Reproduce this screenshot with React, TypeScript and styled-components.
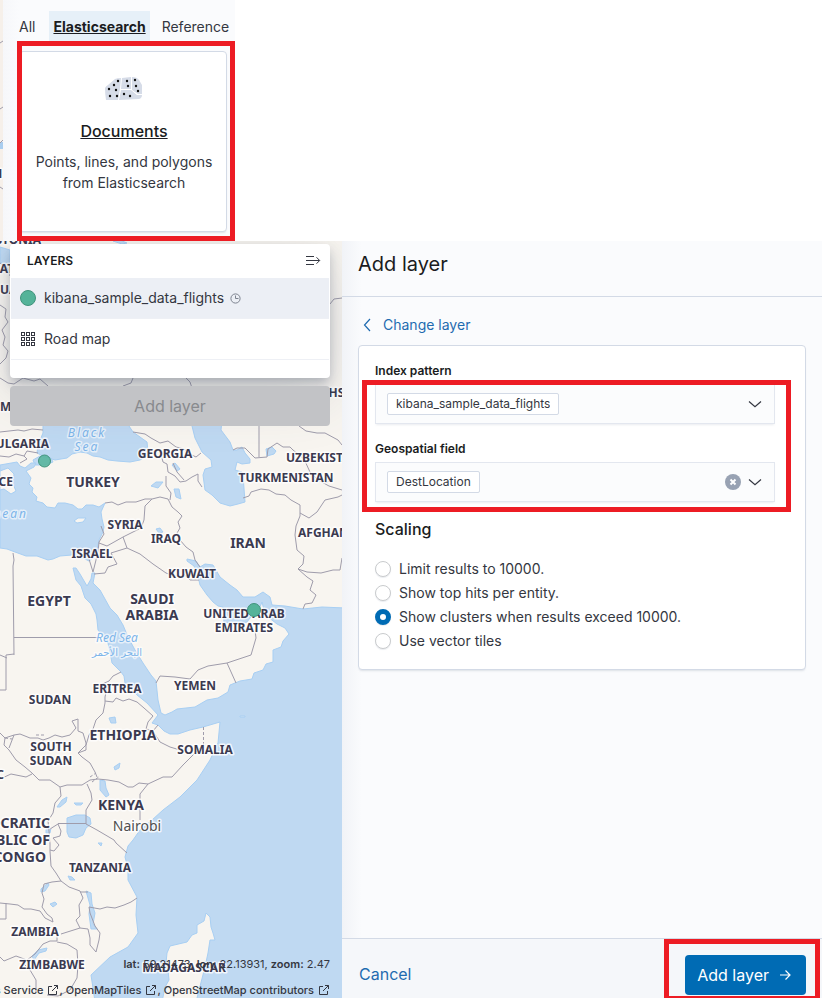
import React, { useState } from "react";
import styled, { createGlobalStyle } from "styled-components";

const GlobalStyle = createGlobalStyle`
  *, *::before, *::after { box-sizing: border-box; }
  body {
    margin: 0;
    background: #fff;
    color: #343741;
    font: 400 14px/20px Inter, "Open Sans", sans-serif;
  }
  button, select, input { font: inherit; color: inherit; margin: 0; }
`;

const Page = styled.div`
  display: grid;
  grid-template-rows: auto 1fr;
  min-height: 100vh;
  padding-right: 2px;
  overflow: hidden;
`;

const SourcePicker = styled.section`
  display: grid;
  grid-template-columns: 3px 232px;
  height: 241px;
`;

const EdgeSvg = styled.svg`
  display: block;
  width: 3px;
  height: 241px;
`;

const PickerPanel = styled.div`
  position: relative;
  padding: 11px 8px 0 4px;
  background: linear-gradient(90deg, #f6f7fa, #fafbfd 16px);
`;

const Tabs = styled.div`
  display: flex;
`;

const Tab = styled.button<{ $active?: boolean }>`
  height: 32px;
  padding: 0 4px;
  margin-right: 8px;
  border: 0;
  background: ${(p) => (p.$active ? "#e6f0f8" : "transparent")};
  color: ${(p) => (p.$active ? "#1a1c21" : "#343741")};
  font-weight: ${(p) => (p.$active ? 700 : 400)};
  text-decoration: ${(p) => (p.$active ? "underline" : "none")};
  white-space: nowrap;
  &:first-child { padding-left: 12px; margin-right: 10px; }
`;

const SourceCard = styled.a`
  display: flex;
  flex-direction: column;
  align-items: center;
  height: 181px;
  margin: 8px 0 0 12px;
  padding: 25px 15px 24px 17px;
  border: 1px solid #d3dae6;
  border-radius: 4px;
  background: #fff;
  box-shadow: 0 2px 2px -1px rgba(152, 162, 179, 0.3);
  color: #343741;
  text-align: center;
  text-decoration: none;
`;

const CardTitle = styled.span`
  margin: 18px 0 8px;
  color: #1a1c21;
  font-size: 16px;
  line-height: 24px;
  font-weight: 500;
  text-decoration: underline;
`;

const CardText = styled.span`
  line-height: 21px;
  white-space: nowrap;
`;

const Highlight = styled.div`
  position: absolute;
  border: 5px solid #ed1c24;
  pointer-events: none;
`;

const SourceHighlight = styled(Highlight)`
  inset: 41px 0 0 14px;
`;

const FieldsHighlight = styled(Highlight)`
  inset: 18px -16px -10px -13px;
`;

const SubmitHighlight = styled(Highlight)`
  inset: -16px -14px -6px -21px;
`;

const Workspace = styled.main`
  display: grid;
  grid-template-columns: minmax(0, 1fr) 480px;
`;

const MapArea = styled.section`
  position: relative;
  display: flex;
  flex-direction: column;
  padding: 3px 12px 0 10px;
  overflow: hidden;
`;

const MapSvg = styled.svg`
  position: absolute;
  inset: 0;
  width: 100%;
  height: 100%;
`;

const LayerPanel = styled.div`
  position: relative;
  height: 134px;
  padding: 0 1px;
  border-radius: 4px;
  background: #fff;
  box-shadow: 0 6px 12px -1px rgba(65, 78, 101, 0.35), 0 16px 60px rgba(65, 78, 101, 0.2);
`;

const LayerHeader = styled.div`
  display: flex;
  align-items: center;
  justify-content: space-between;
  height: 34px;
  padding: 0 8px 0 16px;
`;

const LayerHeading = styled.h2`
  margin: 0;
  color: #1a1c21;
  font-size: 12px;
  line-height: 16px;
  font-weight: 600;
`;

const IconButton = styled.button`
  display: flex;
  padding: 0;
  border: 0;
  background: none;
`;

const LayerRow = styled.button<{ $selected?: boolean }>`
  display: flex;
  align-items: center;
  width: 100%;
  height: 41px;
  padding: 0 9px;
  border: 0;
  border-bottom: 1px solid #eef0f5;
  background: ${(p) => (p.$selected ? "#eceff5" : "#fff")};
  text-align: left;
`;

const LayerName = styled.span`
  margin: 0 6px 0 8px;
`;

const DisabledButton = styled.button`
  position: relative;
  height: 40px;
  margin-top: 8px;
  border: 0;
  border-radius: 4px;
  background: #c2c3c6;
  color: #888a8e;
  font-size: 16px;
`;

const MapFooter = styled.div`
  position: relative;
  display: flex;
  flex-direction: column;
  align-items: flex-end;
  gap: 10px;
  margin-top: auto;
  color: #343741;
  font-size: 11px;
  line-height: 16px;
  white-space: nowrap;
  b { font-weight: 600; }
`;

const Attribution = styled.div`
  display: flex;
  font-weight: 500;
`;

const AttributionLink = styled.a`
  display: flex;
  align-items: center;
  gap: 4px;
  color: inherit;
  text-decoration: none;
`;

const Flyout = styled.aside`
  display: grid;
  grid-template-rows: 56px 1fr 60px;
  background: linear-gradient(90deg, #f1f3f7, #fafbfd 20px);
`;

const FlyoutHeader = styled.header`
  padding: 8px 16px;
  border-bottom: 1px solid #d3dae6;
`;

const FlyoutTitle = styled.h1`
  margin: 0;
  color: #1a1c21;
  font-size: 20px;
  line-height: 30px;
  font-weight: 400;
`;

const FlyoutBody = styled.div`
  padding: 16px;
`;

const BackLink = styled.button`
  display: flex;
  align-items: center;
  gap: 8px;
  height: 24px;
  padding: 0 1px;
  border: 0;
  background: none;
  color: #1f6bb0;
`;

const FormCard = styled.form`
  margin-top: 8px;
  padding: 16px;
  border: 1px solid #d3dae6;
  border-radius: 4px;
  background: #fff;
  box-shadow: 0 2px 2px -1px rgba(152, 162, 179, 0.3);
`;

const FieldLabel = styled.label`
  display: block;
  padding-bottom: 4px;
  color: #1a1c21;
  font-size: 12px;
  line-height: 18px;
  font-weight: 600;
`;

const FieldGroup = styled.div`
  position: relative;
  max-width: 400px;
`;

const ComboField = styled.div`
  display: flex;
  align-items: center;
  gap: 6px;
  height: 40px;
  padding: 0 11px;
  border: 1px solid #e3e7ef;
  background: #fbfcfd;
  box-shadow: 0 2px 2px -1px rgba(152, 162, 179, 0.2);
  & + label { margin-top: 16px; }
`;

const PillSelect = styled.select`
  appearance: none;
  field-sizing: content;
  height: 22px;
  padding: 0 8px;
  margin-right: auto;
  border: 1px solid #d3dae6;
  border-radius: 2px;
  background: #fff;
  font-size: 12px;
  line-height: 20px;
`;

const Scaling = styled.fieldset`
  margin: 15px 0 0;
  padding: 0;
  border: 0;
`;

const ScalingTitle = styled.legend`
  padding: 0;
  margin-bottom: 16px;
  color: #1a1c21;
  font-size: 16px;
  line-height: 24px;
  font-weight: 500;
`;

const RadioLabel = styled.label`
  display: flex;
  align-items: center;
  gap: 8px;
  height: 24px;
`;

const Radio = styled.input`
  appearance: none;
  width: 16px;
  height: 16px;
  border: 1px solid #c9cbcd;
  border-radius: 50%;
  background: #fff;
  box-shadow: 0 1px 1px rgba(152, 162, 179, 0.2);
  &:checked { border: 5px solid #006bb4; }
`;

const FlyoutFooter = styled.footer`
  display: flex;
  align-items: flex-start;
  justify-content: space-between;
  padding: 16px 16px 0 17px;
  border-top: 1px solid #d3dae6;
  background: #f5f7fa;
  overflow: hidden;
`;

const CancelButton = styled.button`
  height: 38px;
  padding: 0;
  border: 0;
  background: none;
  color: #1f6bb0;
  font-size: 16px;
`;

const SubmitWrap = styled.div`
  position: relative;
`;

const SubmitButton = styled.button`
  display: flex;
  align-items: center;
  gap: 8px;
  height: 40px;
  padding: 0 13px 0 12px;
  border: 0;
  border-radius: 4px;
  background: #006bb4;
  color: #fff;
  font-size: 16px;
`;

const Icon = styled.svg`
  flex: none;
  display: block;
  fill: none;
  stroke: currentColor;
`;

const DocumentsIcon = () => (
  <Icon width="38" height="24" viewBox="0 0 38 24" aria-hidden="true">
    <g fill="#d6dce8" stroke="none">
      <path d="M0 11Q1 9 3 8L10 2Q12 1 16 1L15 12 13 23H1Q0 17 0 11z" />
      <path d="M17 1 26 0V12H16z" />
      <path d="M27 0Q32 0 34 3L37 8V17H33L27 13z" />
      <path d="M16 13H26L32 18H37Q37 21 34 22L14 23z" />
    </g>
    {[[13, 4], [9, 8], [4, 12], [11, 13], [5, 19], [12, 19], [22, 4], [23, 9], [30, 3], [31, 9], [33, 14], [19, 17], [25, 19]].map(([x, y]) => (
      <circle key={`${x}-${y}`} cx={x} cy={y} r="1.2" fill="#111" stroke="none" />
    ))}
  </Icon>
);

const CollapseIcon = () => (
  <Icon width="16" height="16" viewBox="0 0 16 16" aria-hidden="true">
    <path d="M1 3.5h8M1 7.500h13.500M1 11.500h8M11.500 4.300l3.200 3.200-3.200 3.200" />
  </Icon>
);

const ClockIcon = () => (
  <Icon width="11" height="11" viewBox="0 0 11 11" stroke="#69707d" aria-hidden="true">
    <g stroke="#7d838f">
      <circle cx="5.500" cy="5.500" r="4.600" />
      <path d="M5.500 2.500v3h3" />
    </g>
  </Icon>
);

const DotIcon = () => (
  <Icon width="16" height="16" viewBox="0 0 16 16" aria-hidden="true">
    <circle cx="8" cy="8" r="7.500" fill="#54b399" stroke="#41937c" />
  </Icon>
);

const GridIcon = () => (
  <Icon width="16" height="16" viewBox="0 0 16 16" aria-hidden="true">
    {[1.5, 6.5, 11.5].flatMap((y) =>
      [1.5, 6.5, 11.5].map((x) => <rect key={`${x}-${y}`} x={x} y={y} width="3" height="3" stroke="#343741" />)
    )}
  </Icon>
);

const PopoutIcon = () => (
  <Icon width="12" height="12" viewBox="0 0 12 12" aria-hidden="true">
    <path d="M5 2.500H1.500v8h8V7M7 1.500h3.500V5M10.500 1.500 5 7" />
  </Icon>
);

const ChevronLeft = () => (
  <Icon width="16" height="16" viewBox="0 0 16 16" strokeWidth="1.200" aria-hidden="true">
    <path d="M11 2 5.500 8l5.500 6" />
  </Icon>
);

const ChevronDown = () => (
  <Icon width="16" height="16" viewBox="0 0 16 16" strokeWidth="1.200" aria-hidden="true">
    <path d="m2 5.500 6 5.300 6-5.300" />
  </Icon>
);

const ClearIcon = () => (
  <Icon width="16" height="16" viewBox="0 0 16 16" aria-hidden="true">
    <circle cx="8" cy="8" r="8" fill="#98a2b3" stroke="none" />
    <g stroke="#fff" strokeWidth="2">
      <path d="m5.500 5.500 5 5m0-5-5 5" />
    </g>
  </Icon>
);

const ArrowRight = () => (
  <Icon width="16" height="16" viewBox="0 0 16 16" strokeWidth="1.200" aria-hidden="true">
    <path d="M3 8h10M8.500 3.500 13 8l-4.500 4.500" />
  </Icon>
);

const WATER = [
  "M0 247 10 250V263H0z",
  "M113 241 120 240 127 243 122 244z",
  "M43 420V433L38 445 37 453 45 457 55 460 67 458 72 454 80 452 87 453 93 456 100 457 108 460 117 461 130 462 140 460 147 456 148 452 147 442 133 432 125 420z",
  "M33 460 40 456 51 458 53 462 45 465 35 465z",
  "M0 465 17 462 20 466 25 468 31 463 36 463 34 467 26 471 31 478 29 484 33 488 32 492 37 497 36 501 43 503 47 507 55 508 58 503 65 503 73 505 78 509 82 509 86 505 93 505 99 507 105 503 101 512 102 519 104 527 103 532 99 540 97 550 93 558 89 561 83 558 78 558 72 555 60 556 53 559 48 560 37 556 26 556 15 552 7 549 0 548z",
  "M190 420 192 426 195 438 202 452 211 460 212 467 205 469 203 475 205 490 212 495 220 503 230 506 238 504 245 502 243 475 242 472 235 470 237 462 242 464 250 463 250 459 245 453 242 447 237 450 233 450 230 442 221 430 222 420z",
  "M266 449 272 447 276 451 274 454 267 456z",
  "M151 486 156 482 163 482 158 488z",
  "M172 465 175 463 180 469 177 471z",
  "M174 489 179 489 181 499 176 497z",
  "M156 529 160 528 163 532 159 533z",
  "M187 559 196 561 200 567 205 564 213 565 220 577 230 585 237 590 243 597 255 597 263 592 270 597 272 605 285 606 303 609 322 607 345 608V1002H95L93 988 91 975 110 957 128 947 138 933 136 915 137 897 128 880 128 868 125 857 128 846 133 840 140 830 152 820 163 810 180 797 197 780 210 760 218 743 220 722 203 727 190 730 178 734 170 734 164 731 158 725 152 723 158 715 147 703 137 695 125 683 124 676 121 672 112 663 110 652 108 643 98 630 97 620 96 614 91 604 85 598 81 586 76 580 73 568 76 568 80 574 87 586 91 579 92 573 95 573 93 583 100 590 110 608 117 615 123 625 128 637 135 650 143 663 151 675 156 681 158 700 161 713 165 715 172 712 177 709 186 708 195 707 207 700 218 698 228 692 230 685 240 681 252 679 254 673 263 670 266 664 273 662 273 650 281 647 283 641 289 634 285 628 277 624 268 617 264 610 262 602 258 612 250 618 247 622 235 624 224 622 223 607 218 606 213 602 207 595 200 585 197 572 194 566 187 561z",
  "M67 818 76 815 85 815 90 818 91 824 86 828 83 835 76 838 69 837 67 832z",
  "M109 718 115 717 116 723 111 723z",
  "M100 780 105 781 106 788 109 795 106 797 100 790z",
  "M57 807 62 800 67 797 66 802 60 807z",
  "M74 803 83 803 81 805 76 805z",
  "M114 767 120 763 119 768 115 770z",
  "M46 829 51 828 50 833 46 833z",
  "M86 891 91 893 92 904 95 913 93 924 97 929 91 929 89 914 90 905z",
  "M68 876 72 877 75 880 70 880z",
  "M41 889 48 883 49 885 45 891 41 892z",
  "M50 904 55 902 57 904 53 907z",
  "M32 956 38 950 47 948 46 951 39 953 34 960z",
  "M98 843 102 843 101 846z",
];

const ISLANDS = [
  "M206 913 210 917 211 927 213 933 215 940 210 940 208 953 205 967 197 998V1002H162L165 987 169 980 168 970 166 963 167 953 170 946 187 942 192 935 197 933 197 925 204 921z",
  "M74 521 78 518 86 518 83 522 77 523z",
  "M240 716 245 716 245 717 240 717z",
  "M0 471 8 468 14 474 13 484 16 491 11 494 4 489 0 490z",
];

const BORDERS = [
  "M0 263 8 269 10 276M0 305 6 309 5 317 8 322 2 330 5 337 3 345 8 351 6 358 0 364M0 378 8 383 14 384 23 378 34 381 40 379 48 386M123 386 131 383 133 378M185 377 190 382 192 388M330 304 334 299 342 298",
  "M0 432 18 430 24 431 32 429 43 430M0 456 9 457 16 454 24 456 27 451 38 453M24 456 27 459 20 463",
  "M133 432 145 434 151 438 160 443 168 441 176 447 184 449 190 454 196 457 201 453M160 450 163 462 167 464 168 472 175 476 180 482 186 481 192 477 198 474 198 481 202 487M166 476 166 486 171 493 170 500M173 463 177 472 184 480",
  "M105 503 112 502 118 505 126 502 136 502 145 499 152 499 160 497 168 499 172 507 178 512 182 516 178 522 180 528 177 533 180 540 186 547 193 552 195 560 200 567",
  "M152 499 145 506 144 520 141 528 123 537 107 546 99 543M123 537 127 548 111 553M127 548 140 554 153 564 166 573 174 576 184 576 190 575M184 574 190 580 199 580M111 553 117 564 108 567 105 573 94 574M93 572 89 559M93 572 98 552 99 542 104 534 101 526",
  "M233 450 237 448 245 448 251 454 255 458 267 457 268 449 277 443 283 447 290 447 293 450M259 457V426M299 426 306 431 317 433 325 433 338 440 342 445M293 450 304 459 310 472M332 480 325 483M310 472 318 480 329 486 342 490",
  "M243 498 249 496 251 492 261 489 269 490 276 494 285 495 291 500 300 505 300 516 296 526 295 535 297 550 304 556 303 564 298 569 307 577 313 581 310 590 316 595 312 603 305 604 303 609M300 513 309 518 317 512 325 500 338 497 342 495M298 569 307 572 321 573 333 570 340 570 342 558",
  "M13 553 14 560 13 566 14 655M14 637.500H98M14 654 6 655V690H0M0 655 7 658",
  "M98 686 109 681 113 676 121 672M105 697 107 688 109 684M156 683 160 676 175 677 190 679 198 670 208 666 227 663 251 655 256 638 255 630M227 663 236 683",
  "M105 701 113 702 116 698 123 701 129 699 137 702 144 708 153 716 148 722 146 729 153 731 158 725M105 697 105 703 103 713 96 720 93 729 89 735 86 745 78 753 82 757 90 763 95 772 97 777M153 731 160 742 170 747 180 750",
  "M194 754 183 765 172 777 163 777 148 784 139 783 133 787 128 787 119 782 108 780 98 779 90 780M148 784 140 794 140 820M194 754 201 747",
  "M0 733 5 738 14 735 20 734 30 738 38 738 43 740 49 738 55 735 62 737 70 735 76 728 72 721 78 719 78 731 83 733 86 743 86 750 78 753M5 738 4 745 9 750 16 760 25 767 32 773 39 780 50 780 60 787 67 785 82 785 90 780M0 779 11 774 26 777 32 774M14 735 9 748",
  "M60 787 61 796 55 803 53 813 48 821 49 831 50 844 50 851 51 866 56 873 61 881M87 784 91 793 92 800 89 805 86 810 86 824 97 830 114 840 116 843 127 853M58 823.500H86M50 829 58 824 61 831 60 836 53 838 59 845 54 851 50 850",
  "M61 881 52 882 44 884 42 893 44 899 42 907 47 914 52 918 53 922 45 918 40 911 31 909 24 909 18 905 10 904 0 903M61 881 69 887 80 891 83 898 79 905 80 916 76 920 80 928 88 929 90 938 90 945 96 952 99 940 100 933 95 926 90 913 89 907 100 909 107 907 115 908 124 905 131 902 137 898M80 892 88 892M80 928 61 934M6 903V919H0",
  "M57 928V934L57 941 50 941 43 944 35 954 27 960 16 956 4 961 0 957M57 942 67 944 77 950 78 965 77 978 70 990 58 996 47 995M22 962 30 970 36 980 36 992",
];

const DASHED = ["M203.500 727V747", "M36 735H46M90 777 96 773M92 782 100 776", "M5 738 12 739"];

type LabelSize = "small" | "large";
const COUNTRIES: { lines: string[]; x: number; y: number; size?: LabelSize; anchor?: "start" | "end" }[] = [
  { lines: ["ESTONIA"], x: 41, y: 244, anchor: "end" },
  { lines: ["LATVIA"], x: 35, y: 273, anchor: "end" },
  { lines: ["LITHUANIA"], x: 40, y: 294, anchor: "end" },
  { lines: ["MOLDOVA"], x: 0, y: 411, anchor: "start" },
  { lines: ["KAZAKHSTAN"], x: 289, y: 397, anchor: "start" },
  { lines: ["BULGARIA"], x: 49, y: 448, anchor: "end" },
  { lines: ["GREECE"], x: 13, y: 486, anchor: "end" },
  { lines: ["TURKEY"], x: 93, y: 487, size: "large" },
  { lines: ["GEORGIA"], x: 165, y: 458 },
  { lines: ["UZBEKISTAN"], x: 286, y: 462, anchor: "start" },
  { lines: ["TURKMENISTAN"], x: 286, y: 482 },
  { lines: ["SYRIA"], x: 125, y: 529 },
  { lines: ["IRAQ"], x: 166, y: 543 },
  { lines: ["IRAN"], x: 248, y: 548, size: "large" },
  { lines: ["AFGHANISTAN"], x: 298, y: 537, anchor: "start" },
  { lines: ["ISRAEL"], x: 92, y: 558 },
  { lines: ["KUWAIT"], x: 192, y: 578 },
  { lines: ["EGYPT"], x: 49, y: 606, size: "large" },
  { lines: ["SAUDI", "ARABIA"], x: 152, y: 604, size: "large" },
  { lines: ["UNITED ARAB", "EMIRATES"], x: 244, y: 618 },
  { lines: ["SUDAN"], x: 50, y: 704 },
  { lines: ["ERITREA"], x: 117, y: 693 },
  { lines: ["YEMEN"], x: 195, y: 690 },
  { lines: ["ETHIOPIA"], x: 123, y: 740, size: "large" },
  { lines: ["SOUTH", "SUDAN"], x: 51, y: 751 },
  { lines: ["SOMALIA"], x: 205, y: 754 },
  { lines: ["KENYA"], x: 121, y: 810, size: "large" },
  { lines: ["DEMOCRATIC"], x: 50, y: 828, size: "large", anchor: "end" },
  { lines: ["REPUBLIC OF"], x: 50, y: 845, size: "large", anchor: "end" },
  { lines: ["THE CONGO"], x: 46, y: 862, size: "large", anchor: "end" },
  { lines: ["TANZANIA"], x: 100, y: 872 },
  { lines: ["ZAMBIA"], x: 35, y: 936 },
  { lines: ["ZIMBABWE"], x: 52, y: 969 },
  { lines: ["MADAGASCAR"], x: 184, y: 972 },
  { lines: ["AFRICAN REPUBLIC"], x: 4, y: 779, anchor: "end" },
];

const CountryText = styled.text<{ $size: LabelSize }>`
  fill: #3b3a50;
  stroke: #fff;
  stroke-width: 3px;
  stroke-opacity: 0.8;
  stroke-linejoin: round;
  paint-order: stroke;
  font: 700 ${(p) => (p.$size === "large" ? 14 : 12)}px "Noto Sans", sans-serif;
`;

const CityText = styled(CountryText)`
  fill: #505050;
  font-weight: 400;
`;

const SeaText = styled(CountryText)<{ $wide?: boolean }>`
  fill: #7db5ea;
  stroke-opacity: 0.6;
  font-weight: 400;
  font-style: italic;
  letter-spacing: ${(p) => (p.$wide ? "2px" : "normal")};
`;

const ArabicSeaText = styled(SeaText)`
  font: 400 10px "DejaVu Sans", sans-serif;
`;

const RoadMap = () => (
  <MapSvg viewBox="0 241 342 757" preserveAspectRatio="xMidYMid slice" role="img" aria-label="Road map">
    <rect x="-2000" y="-1000" width="4000" height="4000" fill="#f8f5f0" />
    <g fill="#bfd9f2" stroke="#a8cff3" strokeWidth="1">
      {WATER.map((d) => <path key={d} d={d} />)}
    </g>
    <g fill="#f8f5f0" stroke="#a8cff3" strokeWidth="1">
      {ISLANDS.map((d) => <path key={d} d={d} />)}
    </g>
    <g fill="none" stroke="#9f9cab" strokeWidth="1" strokeLinejoin="round">
      {BORDERS.map((d) => <path key={d} d={d} />)}
      {DASHED.map((d) => <path key={d} d={d} strokeDasharray="3 2" />)}
    </g>
    <SeaText $size="small" $wide x="87" y="437" textAnchor="middle">Black</SeaText>
    <SeaText $size="small" $wide x="87" y="451" textAnchor="middle">Sea</SeaText>
    <SeaText $size="small" $wide x="28" y="518" textAnchor="end">Mediterranean</SeaText>
    <SeaText $size="small" x="117" y="642" textAnchor="middle">Red Sea</SeaText>
    <ArabicSeaText $size="small" x="117" y="656" textAnchor="middle">البحر الأحمر</ArabicSeaText>
    {COUNTRIES.map(({ lines, x, y, size = "small", anchor = "middle" }) => (
      <CountryText key={`${lines[0]}-${y}`} $size={size} textAnchor={anchor}>
        {lines.map((line, i) => (
          <tspan key={line} x={x} y={y + i * (size === "large" ? 16 : 14)}>{line}</tspan>
        ))}
      </CountryText>
    ))}
    <CityText $size="large" x="137" y="831" textAnchor="middle">Nairobi</CityText>
    <g fill="#54b399" stroke="#41937c">
      <circle cx="44.500" cy="461" r="6" fillOpacity="0.850" />
      <circle cx="254" cy="610" r="6.500" />
    </g>
  </MapSvg>
);

const Combo = ({ id, label, value, clearable }: { id: string; label: string; value: string; clearable?: boolean }) => (
  <>
    <FieldLabel htmlFor={id}>{label}</FieldLabel>
    <ComboField>
      <PillSelect id={id} defaultValue={value}>
        <option>{value}</option>
      </PillSelect>
      {clearable && (
        <IconButton type="button" aria-label="Clear input"><ClearIcon /></IconButton>
      )}
      <ChevronDown />
    </ComboField>
  </>
);

const SCALING = ["Limit results to 10000.", "Show top hits per entity.", "Show clusters when results exceed 10000.", "Use vector tiles"];
const CREDITS = ["Elastic Maps Service", "OpenMapTiles", "OpenStreetMap contributors"];

export default function App() {
  const [scaling, setScaling] = useState(SCALING[2]);
  return (
    <Page>
      <GlobalStyle />
      <SourcePicker>
        <EdgeSvg viewBox="0 0 3 241" aria-hidden="true">
          <rect width="3" height="241" fill="#f6f0ea" />
          <rect y="142" width="3" height="7" fill="#a9cdef" />
          <path d="M0 43 3 41M0 109 3 107M0 143 3 140M0 187 3 189" stroke="#9f9cab" fill="none" />
          <CountryText $size="small" x="-9" y="178">M</CountryText>
        </EdgeSvg>
        <PickerPanel>
          <Tabs role="tablist">
            <Tab role="tab">All</Tab>
            <Tab role="tab" $active aria-selected="true">Elasticsearch</Tab>
            <Tab role="tab">Reference</Tab>
          </Tabs>
          <SourceCard href="#documents">
            <DocumentsIcon />
            <CardTitle>Documents</CardTitle>
            <CardText>Points, lines, and polygons<br />from Elasticsearch</CardText>
          </SourceCard>
          <SourceHighlight />
        </PickerPanel>
      </SourcePicker>
      <Workspace>
        <MapArea>
          <RoadMap />
          <LayerPanel>
            <LayerHeader>
              <LayerHeading>LAYERS</LayerHeading>
              <IconButton aria-label="Collapse layers panel"><CollapseIcon /></IconButton>
            </LayerHeader>
            <LayerRow $selected>
              <DotIcon />
              <LayerName>kibana_sample_data_flights</LayerName>
              <ClockIcon />
            </LayerRow>
            <LayerRow>
              <GridIcon />
              <LayerName>Road map</LayerName>
            </LayerRow>
          </LayerPanel>
          <DisabledButton disabled>Add layer</DisabledButton>
          <MapFooter>
            <div><b>lat:</b> 59.21473, <b>lon:</b> 22.13931, <b>zoom:</b> 2.47</div>
            <Attribution>
              {CREDITS.map((name, i) => (
                <React.Fragment key={name}>
                  <AttributionLink href="#credits">{name} <PopoutIcon /></AttributionLink>
                  {i < CREDITS.length - 1 && <span>,&nbsp;</span>}
                </React.Fragment>
              ))}
            </Attribution>
          </MapFooter>
        </MapArea>
        <Flyout>
          <FlyoutHeader>
            <FlyoutTitle>Add layer</FlyoutTitle>
          </FlyoutHeader>
          <FlyoutBody>
            <BackLink><ChevronLeft />Change layer</BackLink>
            <FormCard>
              <FieldGroup>
                <Combo id="index-pattern" label="Index pattern" value="kibana_sample_data_flights" />
                <Combo id="geo-field" label="Geospatial field" value="DestLocation" clearable />
                <FieldsHighlight />
              </FieldGroup>
              <Scaling>
                <ScalingTitle>Scaling</ScalingTitle>
                {SCALING.map((option) => (
                  <RadioLabel key={option}>
                    <Radio type="radio" name="scaling" checked={scaling === option} onChange={() => setScaling(option)} />
                    {option}
                  </RadioLabel>
                ))}
              </Scaling>
            </FormCard>
          </FlyoutBody>
          <FlyoutFooter>
            <CancelButton>Cancel</CancelButton>
            <SubmitWrap>
              <SubmitButton>Add layer <ArrowRight /></SubmitButton>
              <SubmitHighlight />
            </SubmitWrap>
          </FlyoutFooter>
        </Flyout>
      </Workspace>
    </Page>
  );
}
